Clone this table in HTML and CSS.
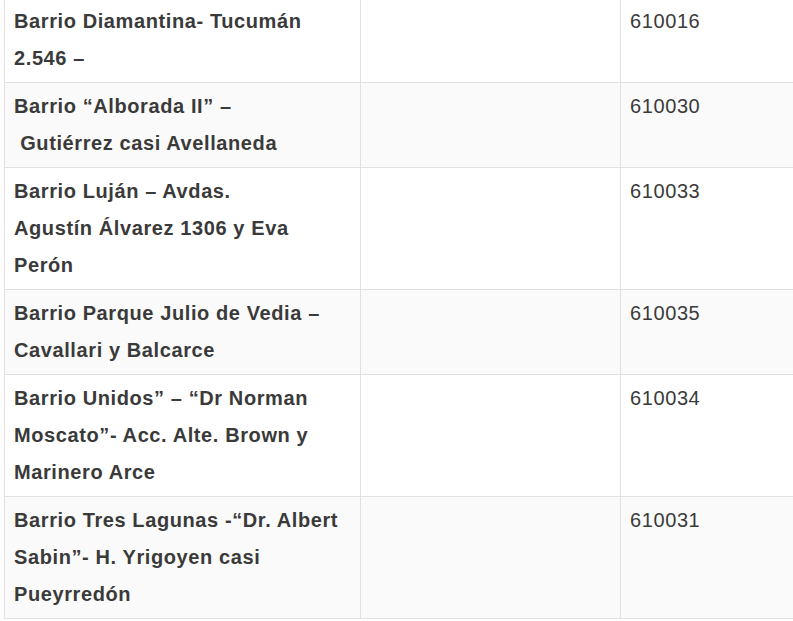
FILE: index.html
```html
<!DOCTYPE html>
<html lang="es">
<head>
<meta charset="utf-8">
<link rel="stylesheet" href="styles.css">
</head>
<body>
<div class="wrap">
<table class="grid">
<colgroup><col class="c1"><col class="c2"><col class="c3"></colgroup>
<tbody>
<tr><td class="name">Barrio Diamantina- Tucumán 2.546 –</td><td></td><td class="code">610016</td></tr>
<tr class="alt"><td class="name">Barrio “Alborada II” –<br>&nbsp;Gutiérrez casi Avellaneda</td><td></td><td class="code">610030</td></tr>
<tr><td class="name">Barrio Luján – Avdas.<br>Agustín Álvarez 1306 y Eva Perón</td><td></td><td class="code">610033</td></tr>
<tr class="alt"><td class="name">Barrio Parque Julio de Vedia – Cavallari y Balcarce</td><td></td><td class="code">610035</td></tr>
<tr><td class="name">Barrio Unidos” – “Dr Norman Moscato”- Acc. Alte. Brown y Marinero Arce</td><td></td><td class="code">610034</td></tr>
<tr class="alt"><td class="name">Barrio Tres Lagunas -“Dr. Albert Sabin”- H. Yrigoyen casi Pueyrredón</td><td></td><td class="code">610031</td></tr>
</tbody>
</table>
</div>
</body>
</html>
```
FILE: styles.css
```css
html, body {
  margin: 0;
  padding: 0;
  background: #ffffff;
  overflow: hidden;
}
.wrap {
  padding-left: 4px;
  margin-top: -3px;
}
.grid {
  border-collapse: collapse;
  table-layout: fixed;
  width: 900px;
  font-family: "Liberation Sans", Arial, sans-serif;
  font-size: 20px;
  letter-spacing: 0.6px;
  line-height: 37px;
  color: #3a3a3a;
}
.c1 { width: 356px; }
.c2 { width: 260px; }
.c3 { width: 284px; }
.grid td {
  border: 1px solid #e1e1e1;
  padding: 5px 9px;
  vertical-align: top;
}
.grid tr.alt td {
  background: #fafafa;
}
.name {
  font-weight: bold;
}
.code {
  font-weight: normal;
  padding-left: 8px;
}
```
